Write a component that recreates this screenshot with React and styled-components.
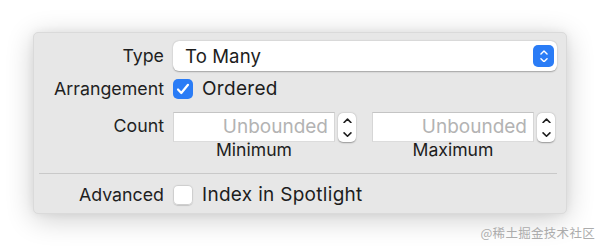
import React from 'react';
import styled, { createGlobalStyle } from 'styled-components';

const GlobalStyle = createGlobalStyle`
  html, body {
    margin: 0;
    padding: 0;
    background: #fff;
  }
  body {
    font-family: Inter, "Noto Sans", sans-serif;
    color: #1d1d1d;
  }
`;

const Page = styled.div`
  width: 600px;
  height: 247px;
  overflow: hidden;
  padding-top: 32px;
  box-sizing: border-box;
  position: relative;
`;

const Panel = styled.div`
  margin-left: 33px;
  width: 534px;
  height: 182px;
  box-sizing: border-box;
  background: #e7e7e7;
  border: 1px solid #dadada;
  border-radius: 5px;
  box-shadow: 0 5px 28px rgba(0, 0, 0, 0.2), 0 0 8px rgba(0, 0, 0, 0.06);
  padding: 8px 9px 0 0;
  display: flex;
  flex-direction: column;
`;

const Row = styled.div`
  display: grid;
  grid-template-columns: 130px 1fr;
  column-gap: 9px;
  align-items: ${(p) => p.$align || 'center'};
  margin-top: ${(p) => p.$top || 0}px;
`;

const Label = styled.div`
  text-align: right;
  font-size: 17.8px;
  line-height: 20px;
  color: #1f1f1f;
  padding-top: ${(p) => p.$pad || 0}px;
  white-space: nowrap;
`;

const Popup = styled.div`
  height: 30px;
  box-sizing: border-box;
  background: #fff;
  border-radius: 6px;
  box-shadow: 0 0.5px 1.5px rgba(0, 0, 0, 0.3);
  display: flex;
  align-items: center;
  justify-content: space-between;
  padding: 0 3px 0 12px;
  font-size: 18.6px;
  letter-spacing: 0.1px;
`;

const PopupArrows = styled.div`
  width: 21px;
  height: 22px;
  border-radius: 5px;
  background: #2a7cf6;
  display: flex;
  align-items: center;
  justify-content: center;
`;

const ArrowStack = styled.div`
  display: flex;
  flex-direction: column;
  gap: 3px;
`;

const CheckLine = styled.label`
  display: flex;
  align-items: center;
  gap: 9px;
  height: 20px;
  line-height: 20px;
  font-size: 19px;
  letter-spacing: 0.3px;
  color: #1d1d1d;
  white-space: nowrap;
`;

const Box = styled.span`
  width: 20px;
  height: 20px;
  flex: none;
  box-sizing: border-box;
  border-radius: 5px;
  display: flex;
  align-items: center;
  justify-content: center;
  background: ${(p) => (p.$checked ? '#2a7cf6' : '#fff')};
  box-shadow: ${(p) =>
    p.$checked ? 'none' : 'inset 0 0 0 1px #cfcfcf, 0 0.5px 1px rgba(0,0,0,0.15)'};
`;

const CountGroup = styled.div`
  display: flex;
  gap: 15px;
`;

const Field = styled.div`
  display: flex;
  flex-direction: column;
  align-items: center;
  width: 184px;
`;

const FieldRow = styled.div`
  display: flex;
  align-items: center;
  gap: 3px;
  align-self: stretch;
`;

const Input = styled.div`
  width: 162px;
  height: 30px;
  box-sizing: border-box;
  background: #fff;
  border-top: 1px solid #c4c4c4;
  border-left: 1px solid #d6d6d6;
  border-right: 1px solid #d6d6d6;
  border-bottom: 1px solid #dcdcdc;
  font-size: 19px;
  color: #b3b3b3;
  text-align: right;
  line-height: 28px;
  padding-right: 6px;
  white-space: nowrap;
`;

const Stepper = styled.div`
  width: 18px;
  height: 29px;
  border-radius: 5px;
  background: #fff;
  box-shadow: 0 0.5px 1.5px rgba(0, 0, 0, 0.35);
  display: flex;
  flex-direction: column;
  align-items: center;
  justify-content: space-around;
  margin-top: 2px;
`;

const Caption = styled.div`
  font-size: 17.6px;
  line-height: 20px;
  margin-top: -2px;
  width: 162px;
  text-align: center;
  align-self: flex-start;
`;

const Divider = styled.div`
  height: 1px;
  background: #c9c9c9;
  margin: 13px 0 11px 5px;
`;

const Watermark = styled.div`
  position: absolute;
  right: 5px;
  bottom: 5px;
  font-family: "Noto Sans CJK SC", sans-serif;
  font-size: 12.5px;
  color: #acacac;
  letter-spacing: 0.3px;
`;

const Chevron = ({ up, color = '#1d1d1d', size = 9 }) => (
  <svg width={size} height={size * 0.6} viewBox="0 0 10 6">
    <path
      d={up ? 'M1.2 5 L5 1.3 L8.8 5' : 'M1.2 1 L5 4.7 L8.8 1'}
      fill="none"
      stroke={color}
      strokeWidth="1.8"
      strokeLinecap="round"
      strokeLinejoin="round"
    />
  </svg>
);

const Check = () => (
  <svg width="14" height="12" viewBox="0 0 14 12">
    <path
      d="M2 6.5 L5.3 10 L12 1.8"
      fill="none"
      stroke="#fff"
      strokeWidth="2.2"
      strokeLinecap="round"
      strokeLinejoin="round"
    />
  </svg>
);

const CountField = ({ caption }) => (
  <Field>
    <FieldRow>
      <Input>Unbounded</Input>
      <Stepper>
        <Chevron up />
        <Chevron />
      </Stepper>
    </FieldRow>
    <Caption>{caption}</Caption>
  </Field>
);

export default function App() {
  return (
    <>
      <GlobalStyle />
      <Page>
        <Panel>
          <Row>
            <Label>Type</Label>
            <Popup>
              <span>To Many</span>
              <PopupArrows>
                <ArrowStack>
                  <Chevron up color="#fff" size={8} />
                  <Chevron color="#fff" size={8} />
                </ArrowStack>
              </PopupArrows>
            </Popup>
          </Row>
          <Row $top={8}>
            <Label>Arrangement</Label>
            <CheckLine>
              <Box $checked>
                <Check />
              </Box>
              Ordered
            </CheckLine>
          </Row>
          <Row $top={12} $align="start">
            <Label $pad={5}>Count</Label>
            <CountGroup>
              <CountField caption="Minimum" />
              <CountField caption="Maximum" />
            </CountGroup>
          </Row>
          <Divider />
          <Row>
            <Label>Advanced</Label>
            <CheckLine>
              <Box />
              Index in Spotlight
            </CheckLine>
          </Row>
        </Panel>
        <Watermark>@稀土掘金技术社区</Watermark>
      </Page>
    </>
  );
}
